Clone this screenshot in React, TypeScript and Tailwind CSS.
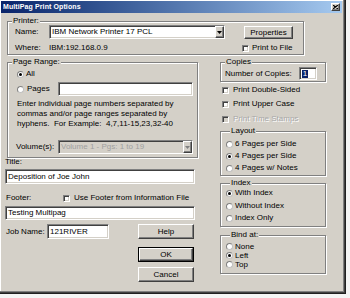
import type React from "react";

const sunken =
  "border border-t-[#808080] border-l-[#808080] border-r-white border-b-white shadow-[inset_1px_1px_0_#404040,inset_-1px_-1px_0_#d4d0c8]";
const raised =
  "border border-t-white border-l-white border-r-[#404040] border-b-[#404040] shadow-[inset_-1px_-1px_0_#808080] bg-[#d4d0c8]";

const GroupBox: React.FC<{ label: string; className?: string; children: React.ReactNode }> = ({
  label,
  className = "",
  children,
}) => (
  <fieldset
    className={`border border-[#808080] shadow-[inset_1px_1px_0_#fff,1px_1px_0_#fff] ${className}`}
  >
    <legend className="ml-[4px] px-[1px] h-[8px] leading-[8px] text-[8px] bg-[#d4d0c8]">
      {label}
    </legend>
    {children}
  </fieldset>
);

const Radio: React.FC<{ checked?: boolean }> = ({ checked }) => (
  <span className="w-[7px] h-[7px] rounded-full bg-white border border-[#808080] border-r-[#c0c0c0] border-b-[#c0c0c0] shrink-0 flex items-center justify-center">
    {checked && <span className="w-[3px] h-[3px] rounded-full bg-black" />}
  </span>
);

const Check: React.FC<{ disabled?: boolean }> = ({ disabled }) => (
  <span
    className={`w-[7px] h-[7px] shrink-0 ${sunken} ${disabled ? "bg-[#d4d0c8]" : "bg-white"}`}
  />
);

const Combo: React.FC<{ value: string; disabled?: boolean; className?: string }> = ({
  value,
  disabled,
  className = "",
}) => (
  <div
    className={`flex items-center ${sunken} ${disabled ? "bg-[#d4d0c8] text-[#a0a0a0]" : "bg-white"} ${className}`}
  >
    <span className="flex-1 pl-[2px] whitespace-nowrap overflow-hidden">{value}</span>
    <span className={`w-[9px] h-full flex items-center justify-center ${raised}`}>
      <svg width="5" height="3" viewBox="0 0 5 3">
        <path d="M0 0h5L2.5 3z" fill={disabled ? "#808080" : "#000"} />
      </svg>
    </span>
  </div>
);

const Btn: React.FC<{ label: string; className?: string }> = ({ label, className = "" }) => (
  <div className={`flex items-center justify-center ${raised} ${className}`}>{label}</div>
);

const RadioRow: React.FC<{ label: string; checked?: boolean; className?: string }> = ({
  label,
  checked,
  className = "",
}) => (
  <div className={`flex items-center gap-[2px] ${className}`}>
    <Radio checked={checked} />
    <span>{label}</span>
  </div>
);

export default function App() {
  return (
    <div className="w-[350px] h-[298px] bg-[#f4f4f4] font-['Liberation_Sans',Arial,sans-serif] text-[8px] leading-[8px] text-black">
      <div className="w-[346px] h-[294px] bg-[#d4d0c8] shadow-[inset_-1px_-1px_0_#202020,inset_-2px_-2px_0_#404040,inset_-3px_-3px_0_#808080,inset_1px_1px_0_#fff]">
        {/* Title bar */}
        <div className="ml-[1px] mr-[4px] pt-[1px]">
          <div className="h-[12px] flex items-center justify-between pl-[2px] pr-[2px] bg-gradient-to-r from-[#0a246a] to-[#a6caf0]">
            <span className="text-white font-bold text-[7px] tracking-[0.1px]">
              MultiPag Print Options
            </span>
            <span className={`w-[9px] h-[8px] flex items-center justify-center ${raised}`}>
              <svg width="5" height="4" viewBox="0 0 5 4">
                <path d="M0 0L5 4M5 0L0 4" stroke="#000" strokeWidth="1.2" />
              </svg>
            </span>
          </div>
        </div>

        <div className="pl-[5px]">
          {/* Printer */}
          <GroupBox label="Printer:" className="ml-[2px] mt-[4px] w-[297px] pb-[2px]">
            <div className="flex">
              <div className="flex flex-col pl-[7px]">
                <div className="flex items-center h-[14px]">
                  <span className="w-[34px]">Name:</span>
                  <Combo value="IBM Network Printer 17 PCL" className="w-[176px] h-[14px]" />
                </div>
                <div className="flex items-center h-[8px] mt-[5px]">
                  <span className="w-[34px]">Where:</span>
                  <span>IBM:192.168.0.9</span>
                </div>
              </div>
              <div className="flex flex-col ml-[17px]">
                <Btn label="Properties" className="ml-[2px] mt-[1px] w-[49px] h-[13px]" />
                <div className="flex items-center gap-[3px] h-[8px] mt-[5px]">
                  <Check />
                  <span>Print to File</span>
                </div>
              </div>
            </div>
          </GroupBox>

          <div className="flex mt-[3px]">
            {/* Left column */}
            <div className="w-[195px] flex flex-col">
              <GroupBox label="Page Range:" className="ml-[2px] w-[191px] pb-[3px]">
                <RadioRow label="All" checked className="mt-[3px] h-[10px] pl-[9px]" />
                <div className="flex items-center mt-[3px] h-[14px] pl-[9px]">
                  <Radio />
                  <span className="ml-[3px] w-[31px]">Pages</span>
                  <div className={`w-[135px] h-[14px] bg-white ${sunken}`} />
                </div>
                <div className="mt-[3px] pl-[9px] leading-[10px] whitespace-nowrap">
                  <div>Enter individual page numbers separated by</div>
                  <div>commas and/or page ranges separated by</div>
                  <div>hyphens.&nbsp; For Example:&nbsp; 4,7,11-15,23,32-40</div>
                </div>
                <div className="flex items-center mt-[11px] h-[14px] pl-[8px]">
                  <span className="w-[42px]">Volume(s):</span>
                  <Combo value="Volume 1 - Pgs: 1 to 19" disabled className="w-[135px] h-[14px]" />
                </div>
              </GroupBox>

              <div className="h-[8px]">Title:</div>
              <div className={`mt-[3px] h-[15px] w-[190px] bg-white flex items-center pl-[2px] ${sunken}`}>
                Deposition of Joe John
              </div>

              <div className="flex items-center mt-[10px] h-[8px]">
                <span className="w-[58px] pl-[1px]">Footer:</span>
                <Check />
                <span className="ml-[4px]">Use Footer from Information File</span>
              </div>
              <div className={`mt-[4px] h-[14px] w-[190px] bg-white flex items-center pl-[2px] ${sunken}`}>
                Testing Multipag
              </div>

              <div className="flex items-center mt-[4px] h-[15px]">
                <span className="w-[42px] pl-[1px]">Job Name:</span>
                <div className={`w-[62px] h-[15px] bg-white flex items-center pl-[2px] ${sunken}`}>
                  121RIVER
                </div>
                <Btn label="Help" className="ml-[29px] w-[56px] h-[15px]" />
              </div>
              <div className="ml-[133px] mt-[8px] w-[56px] h-[15px] border border-black">
                <Btn label="OK" className="w-full h-full" />
              </div>
              <Btn label="Cancel" className="ml-[133px] mt-[5px] w-[56px] h-[15px]" />
            </div>

            {/* Right column */}
            <div className="ml-[20px] w-[106px] flex flex-col">
              <GroupBox label="Copies" className="w-[106px] pb-[1px]">
                <div className="flex items-start h-[14px] pl-[4px]">
                  <span className="mt-[4px]">Number of Copies:</span>
                  <div className={`ml-[7px] mt-[1px] w-[18px] h-[13px] bg-white flex items-center pl-[2px] ${sunken}`}>
                    <span className="bg-[#0a246a] text-white px-[1px]">1</span>
                  </div>
                </div>
              </GroupBox>

              <div className="flex items-center gap-[4px] h-[10px] mt-[3px] pl-[2px]">
                <Check />
                <span>Print Double-Sided</span>
              </div>
              <div className="flex items-center gap-[4px] h-[10px] mt-[4px] pl-[2px]">
                <Check />
                <span>Print Upper Case</span>
              </div>
              <div className="flex items-center gap-[4px] h-[10px] mt-[5px] pl-[2px]">
                <Check disabled />
                <span className="text-[#a8a8a8] [text-shadow:1px_1px_0_#fff]">Print Time Stamps</span>
              </div>

              <GroupBox label="Layout" className="mt-[3px] pb-[2px] pl-[5px]">
                <RadioRow label="6 Pages per Side" className="mt-[4px] h-[10px]" />
                <RadioRow label="4 Pages per Side" checked className="mt-[2px] h-[10px]" />
                <RadioRow label="4 Pages w/ Notes" className="mt-[2px] h-[10px]" />
              </GroupBox>

              <GroupBox label="Index" className="mt-[3px] pb-[3px] pl-[5px]">
                <RadioRow label="With Index" checked className="mt-[1px] h-[10px]" />
                <RadioRow label="Without Index" className="mt-[3px] h-[10px]" />
                <RadioRow label="Index Only" className="mt-[2px] h-[10px]" />
              </GroupBox>

              <GroupBox label="Bind at:" className="mt-[4px] pb-[4px] pl-[5px]">
                <RadioRow label="None" className="mt-[3px] h-[9px]" />
                <RadioRow label="Left" checked className="h-[9px]" />
                <RadioRow label="Top" className="h-[9px]" />
              </GroupBox>
            </div>
          </div>
        </div>
      </div>
    </div>
  );
}
